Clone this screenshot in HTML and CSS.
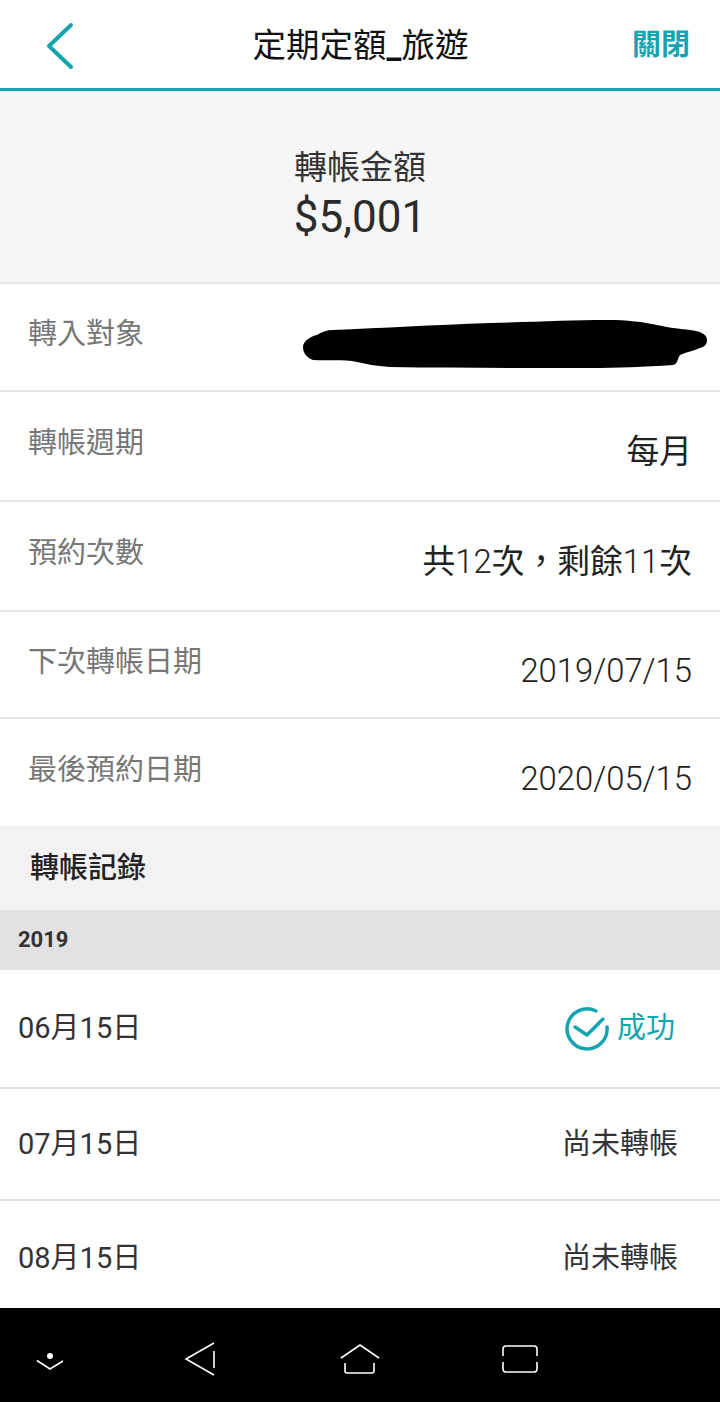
FILE: index.html
```html
<!DOCTYPE html>
<html lang="zh-Hant">
<head>
    <meta charset="UTF-8">
    <meta name="viewport" content="width=device-width, initial-scale=1.0">
    <title>定期定額_旅遊</title>
    <link rel="stylesheet" href="styles.css">
</head>
<body>
    <div class="screen">
        <header class="topbar">
            <svg class="back-icon" width="30" height="50" viewBox="0 0 30 50">
                <path d="M26 4 L4 25 L26 46" fill="none" stroke="#12a5b0" stroke-width="4" stroke-linecap="round" stroke-linejoin="round"/>
            </svg>
            <h1 class="title">定期定額<span class="underscore">_</span>旅遊</h1>
            <span class="close">關閉</span>
        </header>

        <section class="summary">
            <div class="summary-label">轉帳金額</div>
            <div class="summary-amount">$5,001</div>
        </section>

        <div class="info-row row-first">
            <span class="info-label">轉入對象</span>
            <svg class="redact" width="405" height="50" viewBox="0 0 405 50">
                <path d="M0 28 C0 22 8 17 14 16 C18 13 24 11 30 11 C80 9 130 6 187 4 C230 3 270 1 304 1 C325 1 340 3 354 6 C368 9 378 10 387 11 C397 12 404 15 404 21 C404 26 401 28 397 29 C390 32 384 33 377 36 C374 40 375 45 370 46 C340 48 315 49 287 49 C220 49 150 49 87 48 C72 47 64 45 54 43 C40 40 25 42 10 41 C4 39 0 34 0 28 Z" fill="#000"/>
            </svg>
        </div>
        <div class="info-row">
            <span class="info-label">轉帳週期</span>
            <span class="info-value value-high">每月</span>
        </div>
        <div class="info-row">
            <span class="info-label">預約次數</span>
            <span class="info-value value-high">共<span class="num">12</span>次，剩餘<span class="num">11</span>次</span>
        </div>
        <div class="info-row row-short">
            <span class="info-label">下次轉帳日期</span>
            <span class="info-value num">2019/07/15</span>
        </div>
        <div class="info-row row-short row-last">
            <span class="info-label">最後預約日期</span>
            <span class="info-value num">2020/05/15</span>
        </div>

        <div class="section-title">轉帳記錄</div>
        <div class="year-bar">2019</div>

        <div class="record record-tall">
            <span>06月15日</span>
            <span class="status-ok">
                <svg class="check-icon" width="46" height="46" viewBox="0 0 46 46">
                    <path d="M32 5 A20 20 0 1 0 43 21" fill="none" stroke="#12a5b0" stroke-width="3.5" stroke-linecap="round"/>
                    <path d="M11 21 L23 29 L39 13" fill="none" stroke="#12a5b0" stroke-width="3.5" stroke-linecap="round" stroke-linejoin="round"/>
                </svg>
                成功
            </span>
        </div>
        <div class="record">
            <span>07月15日</span>
            <span>尚未轉帳</span>
        </div>
        <div class="record record-end">
            <span>08月15日</span>
            <span>尚未轉帳</span>
        </div>

        <nav class="navbar">
            <svg class="nav-hide" width="30" height="30" viewBox="0 0 30 30">
                <circle cx="15" cy="12" r="3" fill="#fff"/>
                <path d="M2 16.500 L15 25 L28 17" fill="none" stroke="#fff" stroke-width="1.6"/>
            </svg>
            <svg class="nav-back" width="32" height="34" viewBox="0 0 32 34">
                <path d="M30 1 L2 17 L30 33 M30 9 L30 26" fill="none" stroke="#fff" stroke-width="1.6"/>
            </svg>
            <svg class="nav-home" width="40" height="30" viewBox="0 0 40 30">
                <path d="M1 14 L20 1 L39 14 M5 19 L5 27 Q5 29 7 29 L32 29 Q34 29 34 27 L34 19" fill="none" stroke="#fff" stroke-width="1.6"/>
            </svg>
            <svg class="nav-recent" width="36" height="28" viewBox="0 0 36 28">
                <path d="M1 11 L1 4 Q1 1 4 1 L32 1 Q35 1 35 4 L35 11 M1 17 L1 24 Q1 27 4 27 L32 27 Q35 27 35 24 L35 17" fill="none" stroke="#fff" stroke-width="1.6"/>
            </svg>
        </nav>
    </div>
</body>
</html>
```

FILE: styles.css
```css
* {
    box-sizing: border-box;
}
body {
    margin: 0;
    padding: 0;
    background: #fff;
    font-family: Roboto, "Noto Sans CJK TC", sans-serif;
    color: #333;
}
.screen {
    width: 720px;
    height: 1402px;
    display: flex;
    flex-direction: column;
    overflow: hidden;
}
.topbar {
    height: 91px;
    flex: none;
    display: flex;
    align-items: center;
    justify-content: space-between;
    padding: 0 30px 4px 45px;
    background: #fff;
    border-bottom: 3px solid #12a5b0;
}
.back-icon {
    margin-top: 8px;
}
.title {
    margin: 0 0 0 14px;
    font-size: 33.5px;
    font-weight: 400;
    color: #111;
}
.underscore {
    font-weight: 700;
}
.close {
    font-size: 29px;
    font-weight: 700;
    color: #12a5b0;
}
.summary {
    height: 193px;
    flex: none;
    display: flex;
    flex-direction: column;
    align-items: center;
    padding-top: 53px;
    background: #f6f6f6;
    border-bottom: 2px solid #e4e4e4;
}
.summary-label {
    font-size: 33px;
    line-height: 48px;
    color: #333;
}
.summary-amount {
    font-size: 44px;
    line-height: 50px;
    color: #2b2b2b;
}
.info-row {
    height: 110px;
    flex: none;
    display: flex;
    align-items: center;
    justify-content: space-between;
    padding: 0 28px;
    border-bottom: 2px solid #e4e4e4;
}
.row-first {
    height: 108px;
    padding-right: 12px;
}
.row-short {
    height: 107px;
}
.row-last {
    border-bottom: none;
}
.info-label {
    font-size: 29px;
    color: #777;
    margin-bottom: 12px;
}
.info-value {
    font-size: 32.8px;
    color: #222;
    margin-top: 12px;
}
.value-high {
    margin-top: 4px;
}
.num {
    font-weight: 300;
}
.redact {
    margin-top: 14px;
}
.section-title {
    height: 84px;
    flex: none;
    display: flex;
    align-items: center;
    padding: 0 0 6px 30px;
    font-size: 29px;
    font-weight: 500;
    background: #f2f2f2;
    color: #222;
}
.year-bar {
    height: 60px;
    flex: none;
    display: flex;
    align-items: center;
    padding: 0 0 2px 18px;
    font-size: 22px;
    font-weight: 700;
    background: #e2e2e2;
    color: #333;
}
.record {
    height: 112px;
    flex: none;
    display: flex;
    align-items: center;
    justify-content: space-between;
    padding: 0 42px 6px 18px;
    font-size: 29px;
    color: #333;
    border-bottom: 2px solid #e0e0e0;
}
.record-tall {
    height: 119px;
    padding: 0 45px 8px 18px;
}
.record-end {
    height: 107px;
    padding-bottom: 0;
    border-bottom: none;
}
.status-ok {
    display: flex;
    align-items: center;
    gap: 7px;
    color: #12a5b0;
}
.check-icon {
    margin-top: 8px;
}
.navbar {
    flex: 1;
    display: flex;
    align-items: center;
    background: #000;
    padding: 8px 0 0 35px;
}
.nav-back {
    margin-left: 119px;
}
.nav-home {
    margin-left: 124px;
}
.nav-recent {
    margin-left: 122px;
}
```
